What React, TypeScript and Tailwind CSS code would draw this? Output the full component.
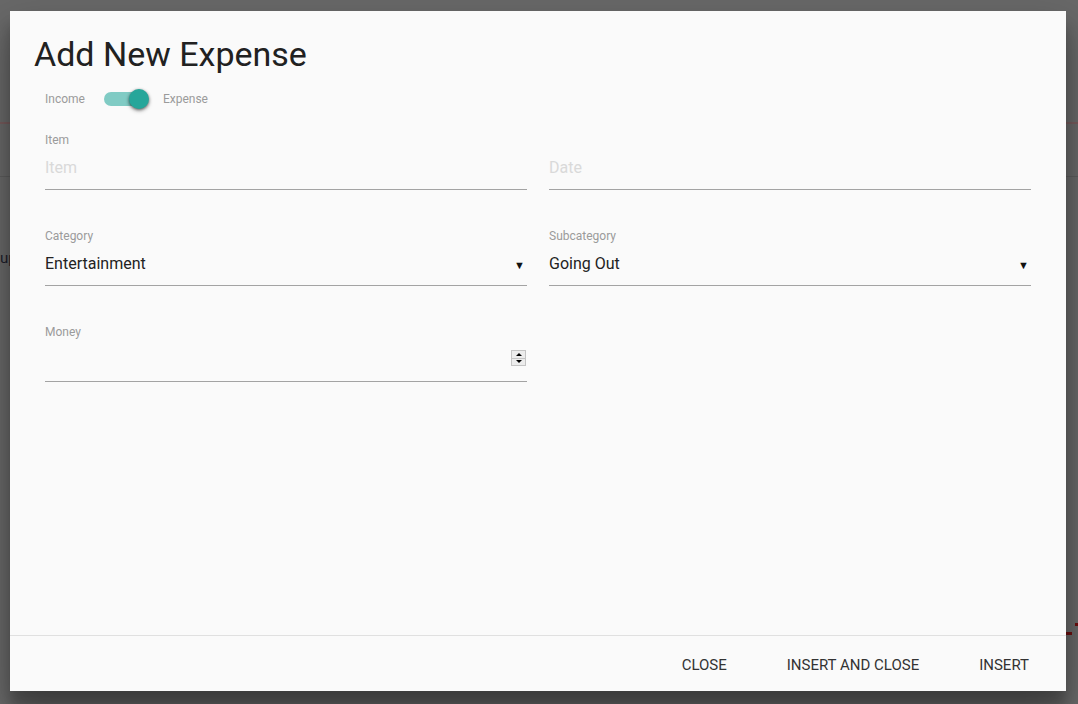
import React, { useState } from "react";

function Field({
  label,
  placeholder,
  value,
  select,
  spinner,
}: {
  label?: string;
  placeholder?: string;
  value?: string;
  select?: boolean;
  spinner?: boolean;
}) {
  return (
    <div className="mb-[38px]">
      <div className="h-[16px] text-[12px] leading-[16px] text-[#9b9b9b]">{label}</div>
      <div className="relative flex h-[42px] items-center border-b border-[#a3a3a3] pb-[2px]">
        {value ? (
          <span className="text-[16px] text-[#222]">{value}</span>
        ) : (
          <span className="text-[16px] text-[#d9d9d9]">{placeholder}</span>
        )}
        {select && (
          <span className="absolute right-[2px] top-[16px] text-[11px] leading-none text-[#111]">▼</span>
        )}
        {spinner && (
          <div className="absolute right-[1px] top-[10px] flex h-[16px] w-[15px] flex-col border border-[#c4c4c4] bg-[#ececec]">
            <div className="flex flex-1 items-center justify-center border-b border-[#c4c4c4]">
              <span className="h-0 w-0 border-x-[3px] border-b-[3px] border-x-transparent border-b-black" />
            </div>
            <div className="flex flex-1 items-center justify-center">
              <span className="h-0 w-0 border-x-[3px] border-t-[3px] border-x-transparent border-t-black" />
            </div>
          </div>
        )}
      </div>
    </div>
  );
}

export default function App() {
  const [expense, setExpense] = useState(true);

  return (
    <div
      className="relative h-[704px] w-[1078px] overflow-hidden bg-[#686868]"
      style={{ fontFamily: "Roboto, 'Noto Sans', sans-serif" }}
    >
      {/* page behind the overlay */}
      <div className="pt-[122px]">
        <div className="h-[2px] bg-[#745a5b]" />
        <div className="mt-[52px] h-[1px] bg-[#5c5c5c]" />
        <div className="mt-[70px] text-[15px] text-[#1d1d2a]">up</div>
      </div>
      <div className="absolute left-[1066px] top-[632px] h-[3px] w-[6px] bg-[#6b0f0f]" />
      <div className="absolute left-[1075px] top-[623px] h-[3px] w-[3px] bg-[#6b0f0f]" />

      {/* dialog */}
      <div className="absolute left-[10px] top-[11px] flex h-[680px] w-[1056px] flex-col bg-[#fafafa] shadow-[0_19px_38px_rgba(0,0,0,0.30),0_15px_12px_rgba(0,0,0,0.22)]">
        <div className="flex-1 pt-[23px]">
          <h1 className="pl-[24px] text-[34px] leading-[40px] font-normal text-[#212121]">
            Add New Expense
          </h1>

          <div className="mt-[13px] flex h-[24px] items-center pl-[35px] text-[12px] text-[#9b9b9b]">
            <span>Income</span>
            <button
              onClick={() => setExpense(!expense)}
              className="relative ml-[19px] flex h-[24px] w-[46px] items-center"
            >
              <span className="h-[14px] w-[40px] rounded-full bg-[#80cbc4]" />
              <span
                className={`absolute top-[2px] h-[20px] w-[20px] rounded-full shadow-[0_1px_3px_rgba(0,0,0,0.5),0_2px_4px_rgba(0,0,0,0.25)] ${
                  expense ? "left-[25px] bg-[#26a69a]" : "left-[-2px] bg-[#f1f1f1]"
                }`}
              />
            </button>
            <span className="ml-[13px]">Expense</span>
          </div>

          <div className="mt-[21px] grid grid-cols-2 gap-x-[22px] px-[35px]">
            <Field label="Item" placeholder="Item" />
            <Field placeholder="Date" />
            <Field label="Category" value="Entertainment" select />
            <Field label="Subcategory" value="Going Out" select />
            <Field label="Money" spinner />
          </div>
        </div>

        <div className="flex h-[56px] items-center justify-end gap-[28px] border-t border-[#e0e0e0] pr-[21px] pt-[3px]">
          {["Close", "Insert and close", "Insert"].map((b) => (
            <button key={b} className="px-[16px] py-[8px] text-[15px] uppercase text-[#333]">
              {b}
            </button>
          ))}
        </div>
      </div>
    </div>
  );
}
